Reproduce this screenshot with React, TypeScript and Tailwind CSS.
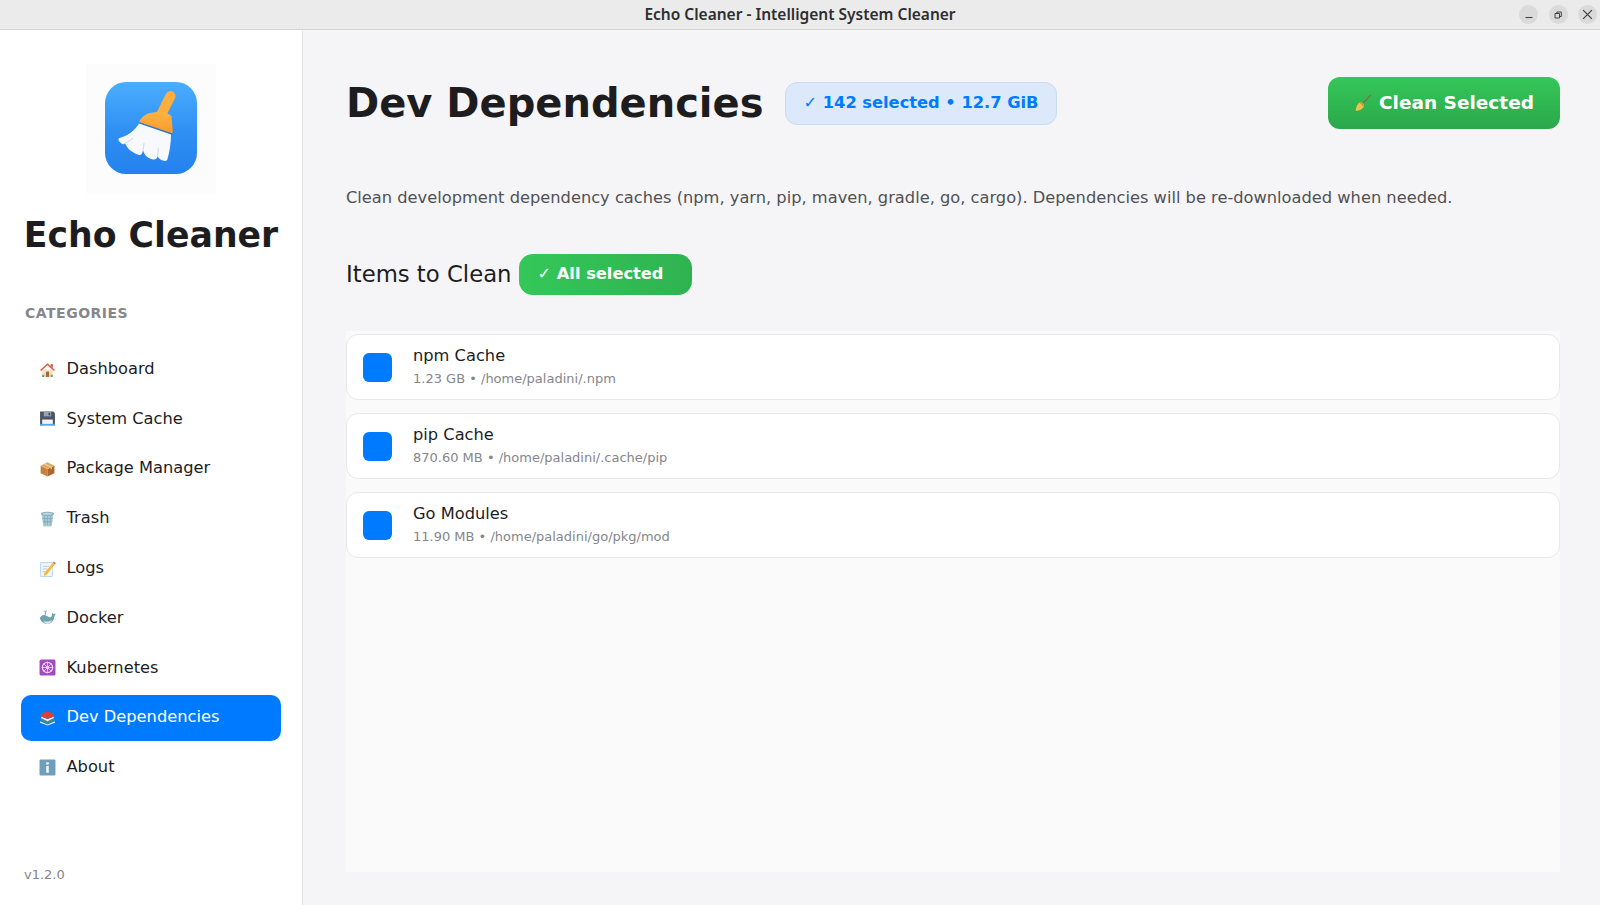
import type { ReactNode } from "react";

const FONT = "font-['DejaVu_Sans',sans-serif]";

function HomeIcon() {
  return (
    <svg viewBox="0 0 16 16" className="w-[17px] h-[17px]">
      <path d="M3 8h10v7H3z" fill="#f3e3c6" />
      <path d="M1 8.500 8 2l7 6.500-1 1L8 4 2 9.500z" fill="#d9603f" />
      <path d="M11 3h2v3.500l-2-1.800z" fill="#b5533a" />
      <path d="M6.500 10h3v5h-3z" fill="#a8643c" />
      <path d="M3 14h2M11 14h2" stroke="#6aa84f" strokeWidth="2" />
    </svg>
  );
}

function SaveIcon() {
  return (
    <svg viewBox="0 0 16 16" className="w-[17px] h-[17px]">
      <path d="M1 1.500h12.500L15 3v11.500H1z" fill="#4b5563" />
      <path d="M4.500 1.500h7v4.500h-7z" fill="#9aa3ad" />
      <path d="M9 2.500h1.500v2.500H9z" fill="#3f4854" />
      <path d="M3 9h10v5.500H3z" fill="#f2f5f8" />
      <path d="M1 13h14v1.500H1z" fill="#5aa9e6" />
    </svg>
  );
}

function BoxIcon() {
  return (
    <svg viewBox="0 0 16 16" className="w-[17px] h-[17px]">
      <path d="M8 8.500v7l-6.500-3V5.500z" fill="#c4813f" />
      <path d="M8 8.500v7l6.500-3V5.500z" fill="#a9682e" />
      <path d="M8 2l6.500 3.500L8 8.500 1.500 5.500z" fill="#e0a867" />
      <path d="m4.500 4 6.500 3v2l1-.5v-2L5.800 3.300z" fill="#f0cfa0" />
    </svg>
  );
}

function TrashIcon() {
  return (
    <svg viewBox="0 0 16 16" className="w-[17px] h-[17px]">
      <path d="M2.500 4h11l-1.300 10.500q-.1 1-1.200 1H5q-1.100 0-1.200-1z" fill="#a9cbd6" />
      <path d="M5 6l.6 8M8 6v8M11 6l-.6 8M3.500 8h9M3.800 11h8.400" stroke="#7ba5b3" strokeWidth=".7" />
      <ellipse cx="8" cy="3.500" rx="6.300" ry="1.900" fill="#7ea4b2" />
      <ellipse cx="8" cy="3.500" rx="4.800" ry="1.100" fill="#b9d5de" />
    </svg>
  );
}

function MemoIcon() {
  return (
    <svg viewBox="0 0 16 16" className="w-[17px] h-[17px]">
      <path d="M1.500 2.500h11v13h-11z" fill="#f1f7fb" stroke="#a8d2ea" strokeWidth=".8" />
      <path d="M3.500 6h6M3.500 8.500h4.500M3.500 11h3" stroke="#b4c4d0" strokeWidth=".8" />
      <path d="m5 12.500 8-10 2 1.600-8 10-2.600 1z" fill="#f5b93f" />
      <path d="m13 2.500 1-1.200 2 1.600-1 1.200z" fill="#e2617a" />
    </svg>
  );
}

function WhaleIcon() {
  return (
    <svg viewBox="0 0 16 16" className="w-[17px] h-[17px]">
      <path d="M.800 8.500C2 5.500 5 5 7.500 6.500c1.500 1 3 1.500 4 1 .8-1 1-2.500.7-4L14 5l1.800-1-1.300 3C14 11 11.500 14 8 14 4 14 1.500 11.500.800 8.500z" fill="#6fa3ad" />
      <path d="M4 11.500c3 .5 6 0 8.500-1C11 13 9.500 14 8 14c-1.500 0-3-1-4-2.500z" fill="#d6e4e6" />
      <path d="M6 5.500V2.800M4.400 2c1 0 1.600.3 1.600.9M7.600 2c-1 0-1.600.3-1.600.9" stroke="#5aa7c4" strokeWidth=".9" fill="none" />
    </svg>
  );
}

function WheelIcon() {
  return (
    <svg viewBox="0 0 16 16" className="w-[17px] h-[17px]">
      <rect x=".5" y=".5" width="15" height="15" rx="1.500" fill="#a24bc0" />
      <circle cx="8" cy="8" r="4.800" fill="none" stroke="#f0d9f5" strokeWidth="1.100" />
      <circle cx="8" cy="8" r="1.500" fill="#f0d9f5" />
      <path d="M8 2.500v11M2.500 8h11M4.100 4.100l7.800 7.800M11.900 4.100l-7.800 7.800" stroke="#f0d9f5" strokeWidth=".7" />
    </svg>
  );
}

function BooksIcon() {
  return (
    <svg viewBox="0 0 16 16" className="w-[17px] h-[17px]">
      <path d="M1 11.500 8 14.500l7-3V13l-7 2.500L1 13z" fill="#e8eef0" />
      <path d="M1.500 8.500 8 11.500l6.500-3V11L8 14 1.500 11z" fill="#3f8f7e" />
      <path d="M2 7l6 2.500L14 7v1.500l-6 3-6-3z" fill="#f2f2ee" />
      <path d="M2 4.500 8 2l6 2.500V7L8 9.500 2 7z" fill="#d8403c" />
    </svg>
  );
}

function InfoIcon() {
  return (
    <svg viewBox="0 0 16 16" className="w-[17px] h-[17px]">
      <rect x=".5" y=".5" width="15" height="15" rx="1" fill="#6f9fb8" />
      <path d="M6.800 3h2.400v2.200H6.800zM6.800 6.500h2.400V13H6.800z" fill="#f2f6f8" />
    </svg>
  );
}

function SmallBroom() {
  return (
    <svg viewBox="0 0 18 18" className="w-[18px] h-[18px]">
      <path d="M7.500 10.500 16.500 1.500" stroke="#8a6a3c" strokeWidth="1.300" strokeLinecap="round" />
      <path d="M6.500 8c1.500.2 3.300 2 3.500 3.500-.5 2.500-2.500 4.500-7.500 5.500-.8 0-1-.5-.8-1.200C2.500 12 4 9 6.500 8z" fill="#f0c24a" />
      <path d="M6.300 8.300c1.400.3 3 1.800 3.400 3.200l-1 .9c-.5-1.500-1.900-2.900-3.400-3.300z" fill="#c98a2d" />
    </svg>
  );
}

function AppLogo() {
  return (
    <svg viewBox="0 0 92 92" className="w-[92px] h-[92px]">
      <defs>
        <linearGradient id="logoBg" x1="0" y1="0" x2="0" y2="1">
          <stop offset="0" stopColor="#4aaeff" />
          <stop offset="0.55" stopColor="#2f8ff2" />
          <stop offset="1" stopColor="#2382ee" />
        </linearGradient>
        <linearGradient id="logoHandle" x1="0" y1="0" x2="0" y2="1">
          <stop offset="0" stopColor="#fcb445" />
          <stop offset="1" stopColor="#fb9a2b" />
        </linearGradient>
      </defs>
      <rect width="92" height="92" rx="21" fill="url(#logoBg)" />
      <path d="M65.500 14 55 35" stroke="#fcae3e" strokeWidth="10" strokeLinecap="round" />
      <path d="M34 40c1.500-3.500 5-7 9-8.500 4.500-1.200 9-1.500 13.500-1.800 3.500.5 7.500 2 10 4.500l1.300 15.500-.8 1.500z" fill="url(#logoHandle)" />
      <path d="M34 40.800 67 52" stroke="#3f6fa8" strokeWidth="1.200" />
      <path d="M34 41.500 66 52.500C66 61 64.500 70 62.500 77c-.5 2-2 2.200-3.500 1.800-3-.8-5-1.800-6.500-4.800 0 2.500-2 4-4.500 3.500-5-1-8.500-4-10-9.500-.5 4-2 5.500-4.500 4.800C28 71 22 67 20 61c-1 2-3 1.500-5-1-2-1.500-2-3-.5-4C23 54 30 48 34 41.500z" fill="#f7f9fc" />
      <path d="M20 61c3-1 6-3 8-5M38 68c.5-3 1-5 1-7M52.500 74c.5-3 .8-5 .8-8" stroke="#c9d8ea" strokeWidth="1" fill="none" />
    </svg>
  );
}

const NAV_ITEMS: { label: string; icon: ReactNode; active?: boolean }[] = [
  { label: "Dashboard", icon: <HomeIcon /> },
  { label: "System Cache", icon: <SaveIcon /> },
  { label: "Package Manager", icon: <BoxIcon /> },
  { label: "Trash", icon: <TrashIcon /> },
  { label: "Logs", icon: <MemoIcon /> },
  { label: "Docker", icon: <WhaleIcon /> },
  { label: "Kubernetes", icon: <WheelIcon /> },
  { label: "Dev Dependencies", icon: <BooksIcon />, active: true },
  { label: "About", icon: <InfoIcon /> },
];

const ITEMS = [
  { name: "npm Cache", detail: "1.23 GB • /home/paladini/.npm" },
  { name: "pip Cache", detail: "870.60 MB • /home/paladini/.cache/pip" },
  { name: "Go Modules", detail: "11.90 MB • /home/paladini/go/pkg/mod" },
];

function TitleBar() {
  return (
    <header className="relative h-[30px] shrink-0 flex items-center justify-center bg-[#ebebeb] border-b border-[#d4d4d4]">
      <span className="font-['Noto_Sans',sans-serif] font-semibold text-[15.500px] text-[#2e2e2e]">
        Echo Cleaner - Intelligent System Cleaner
      </span>
      <div className="absolute right-[3px] top-[5px] flex gap-[10.500px]">
        <button className="w-[19px] h-[19px] rounded-full bg-[#dadada] flex items-center justify-center">
          <svg viewBox="0 0 10 10" className="w-[10px] h-[10px]">
            <path d="M1.500 7.500h7" stroke="#444" strokeWidth="1.100" />
          </svg>
        </button>
        <button className="w-[19px] h-[19px] rounded-full bg-[#dadada] flex items-center justify-center">
          <svg viewBox="0 0 10 10" className="w-[10px] h-[10px]">
            <path d="M2 3.500h4.500V8H2z M3.800 3.500V2h4.500v4.500H6.500" stroke="#444" strokeWidth="1" fill="none" />
          </svg>
        </button>
        <button className="w-[19px] h-[19px] rounded-full bg-[#dadada] flex items-center justify-center">
          <svg viewBox="0 0 10 10" className="w-[11px] h-[11px]">
            <path d="m1 1 8 8m0-8-8 8" stroke="#444" strokeWidth="1.200" />
          </svg>
        </button>
      </div>
    </header>
  );
}

function Sidebar() {
  return (
    <aside className="w-[303px] shrink-0 bg-white border-r border-[#e6e6e8] flex flex-col px-[21px]">
      <div className="self-center mt-[34px] w-[130px] h-[130px] bg-[#fcfcfc] flex items-center justify-center pb-[2px]">
        <AppLogo />
      </div>
      <h1 className="mt-[19px] text-center text-[34.700px] leading-[44px] font-bold text-[#1d1d1f]">Echo Cleaner</h1>
      <div className="mt-[46px] ml-[4px] text-[14px] leading-[20px] font-bold tracking-[0.5px] text-[#86868b]">CATEGORIES</div>
      <nav className="mt-[23px] flex flex-col gap-[3.800px]">
        {NAV_ITEMS.map((item) => (
          <a
            key={item.label}
            className={
              item.active
                ? "h-[46px] rounded-[10px] bg-[#007aff] text-white flex items-center pl-[18px] gap-[10.500px] text-[16.250px]"
                : "h-[46px] rounded-[10px] text-[#1d1d1f] flex items-center pl-[18px] gap-[10.500px] text-[16.250px]"
            }
          >
            {item.icon}
            <span>{item.label}</span>
          </a>
        ))}
      </nav>
      <div className="mt-auto mb-[20px] ml-[3px] text-[13px] leading-[20px] text-[#86868b]">v1.2.0</div>
    </aside>
  );
}

function ItemRow({ name, detail }: { name: string; detail: string }) {
  return (
    <div className="h-[66px] rounded-[12px] bg-white border border-[#e8e8ea] flex items-center pl-[16px]">
      <span className="w-[29px] h-[29px] rounded-[6px] bg-[#007aff] shrink-0" />
      <div className="ml-[21px] mb-[2px]">
        <div className="text-[16.250px] leading-[24px] text-[#1d1d1f]">{name}</div>
        <div className="mt-[1px] text-[13px] leading-[20px] text-[#86868b]">{detail}</div>
      </div>
    </div>
  );
}

export default function App() {
  return (
    <div className={`${FONT} w-[1600px] h-[905px] flex flex-col overflow-hidden bg-[#f5f5f7]`}>
      <TitleBar />
      <div className="flex-1 flex min-h-0">
        <Sidebar />
        <main className="flex-1 flex flex-col min-w-0 pl-[43px] pr-[40px] pb-[33px]">
          <div className="mt-[47px] h-[52px] flex items-center">
            <h2 className="text-[40px] leading-[52px] font-bold text-[#1d1d1f]">Dev Dependencies</h2>
            <span className="ml-[21px] h-[43px] px-[18px] rounded-[12px] bg-[#dce9fa] border border-[#c8dcf6] text-[#007aff] text-[16.250px] font-bold flex items-center">
              ✓ 142 selected • 12.7 GiB
            </span>
            <button className="ml-auto w-[232px] h-[52px] rounded-[12px] bg-gradient-to-b from-[#34c759] to-[#2ba84a] text-white text-[18.500px] font-bold flex items-center justify-center gap-[7px]">
              <SmallBroom />
              Clean Selected
            </button>
          </div>
          <p className="mt-[56.500px] text-[16.250px] leading-[24px] text-[#515154]">
            Clean development dependency caches (npm, yarn, pip, maven, gradle, go, cargo). Dependencies will be re-downloaded when needed.
          </p>
          <div className="mt-[44px] h-[41px] flex items-center">
            <h3 className="text-[22.750px] text-[#1d1d1f]">Items to Clean</h3>
            <span className="ml-[7px] w-[173px] h-[41px] rounded-[14px] bg-gradient-to-r from-[#34c759] to-[#2fb350] text-white text-[16.250px] font-bold flex items-center pl-[19px]">
              ✓ All selected
            </span>
          </div>
          <section className="mt-[36.500px] flex-1 bg-[#fafafa] pt-[3px] flex flex-col gap-[13px]">
            {ITEMS.map((item) => (
              <ItemRow key={item.name} name={item.name} detail={item.detail} />
            ))}
          </section>
        </main>
      </div>
    </div>
  );
}
